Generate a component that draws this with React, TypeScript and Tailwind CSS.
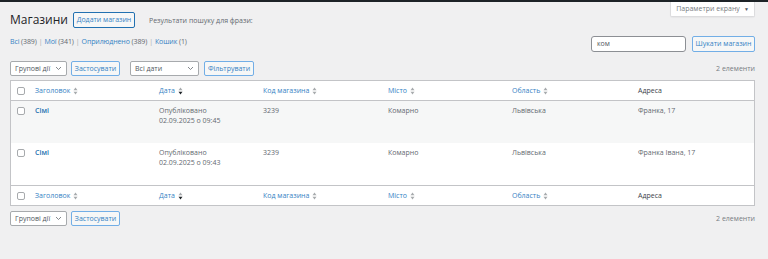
import React from "react";

const Sort = ({ active }: { active?: boolean }) => (
    <svg width="5" height="8" viewBox="0 0 10 16" className="ml-[3px] shrink-0">
        <path d="M5 1 L9 6.5 H1 Z" fill="#a7aaad" />
        <path d="M5 15 L9 9.5 H1 Z" fill={active ? "#1d2327" : "#a7aaad"} />
    </svg>
);

const Check = () => (
    <span className="block w-[8px] h-[8px] rounded-[2px] border border-[#a7aaad] bg-white" />
);

const Chevron = () => (
    <svg width="7" height="5" viewBox="0 0 14 10" className="shrink-0">
        <polyline points="2,2 7,7 12,2" fill="none" stroke="#646970" strokeWidth="1.6" />
    </svg>
);

const Select = ({ label, w }: { label: string; w: string }) => (
    <div className={`${w} h-[15px] flex items-center justify-between px-[4px] bg-white border border-[#a7aaad] rounded-[2px] text-[#50575e]`}>
        <span>{label}</span>
        <Chevron />
    </div>
);

const Button = ({ label, w }: { label: string; w: string }) => (
    <button className={`${w} h-[15px] flex items-center justify-center bg-[#f6f7f7] border border-[#72aee6] rounded-[2px] text-[#3582c4]`}>
        {label}
    </button>
);

const cols = "grid grid-cols-[19px_124px_104px_125px_124px_126px_1fr]";

const HeadRow = ({ top }: { top?: boolean }) => (
    <div className={`${cols} h-[20px] items-center ${top ? "border-b" : "border-t"} border-[#c3c4c7]`}>
        <div className="pl-[6px]"><Check /></div>
        <div className="pl-[5px] flex items-center text-[#3582c4]">Заголовок<Sort /></div>
        <div className="pl-[5px] flex items-center text-[#3582c4]">Дата<Sort active /></div>
        <div className="pl-[5px] flex items-center text-[#3582c4]">Код магазина<Sort /></div>
        <div className="pl-[5px] flex items-center text-[#3582c4]">Місто<Sort /></div>
        <div className="pl-[5px] flex items-center text-[#3582c4]">Область<Sort /></div>
        <div className="pl-[5px] text-[#3c434a]">Адреса</div>
    </div>
);

const rows = [
    { time: "02.09.2025 о 09:45", addr: "Франка, 17", bg: "bg-[#f6f7f7]" },
    { time: "02.09.2025 о 09:43", addr: "Франка Івана, 17", bg: "bg-white" },
];

export default function App() {
    return (
        <div className="w-[768px] h-[259px] bg-[#f0f0f1] overflow-hidden text-[7px] leading-[10px] text-[#646970] font-['Open_Sans',sans-serif]">
            <div className="h-[2px] bg-[#1d2327]" />
            <div className="pl-[10px] pr-[13px]">
                <div className="flex justify-between items-start h-[26px]">
                    <div className="flex items-center mt-[10px] h-[16px]">
                        <h1 className="text-[12px] leading-[16px] text-[#1d2327]">Магазини</h1>
                        <button className="ml-[5px] w-[62px] h-[16px] border border-[#2271b1] rounded-[2px] bg-[#f6f7f7] text-[#3582c4]">
                            Додати магазин
                        </button>
                        <span className="ml-[14px] mt-[2px]">Результати пошуку для фрази:</span>
                    </div>
                    <div className="w-[85px] h-[15px] flex items-center justify-center gap-[4px] bg-white border border-t-0 border-[#dcdcde] rounded-b-[2px] shadow-[0_1px_1px_rgba(0,0,0,0.04)] text-[#787c82]">
                        Параметри екрану
                        <span className="text-[5px] text-[#50575e]">▼</span>
                    </div>
                </div>

                <div className="flex justify-between items-start mt-[8px] h-[16px]">
                    <div className="pt-[1px] flex gap-[2px] tracking-[-0.1px]">
                        <span><a className="text-[#3582c4]">Всі</a> (389)</span>
                        <span className="text-[#a7aaad]">|</span>
                        <span><a className="text-[#3582c4]">Мої</a> (341)</span>
                        <span className="text-[#a7aaad]">|</span>
                        <span><a className="text-[#3582c4]">Оприлюднено</a> (389)</span>
                        <span className="text-[#a7aaad]">|</span>
                        <span><a className="text-[#3582c4]">Кошик</a> (1)</span>
                    </div>
                    <div className="flex items-center">
                        <div className="w-[95px] h-[16px] flex items-center px-[5px] bg-white border border-[#8c8f94] rounded-[3px] text-[#50575e]">ком</div>
                        <button className="ml-[6px] w-[63px] h-[16px] bg-[#f6f7f7] border border-[#72aee6] rounded-[2px] text-[#3582c4]">
                            Шукати магазин
                        </button>
                    </div>
                </div>

                <div className="flex items-center justify-between mt-[9px] h-[15px]">
                    <div className="flex items-center">
                        <Select label="Групові дії" w="w-[57px]" />
                        <div className="ml-[4px]"><Button label="Застосувати" w="w-[49px]" /></div>
                        <div className="ml-[10px]"><Select label="Всі дати" w="w-[69px]" /></div>
                        <div className="ml-[5px]"><Button label="Фільтрувати" w="w-[50px]" /></div>
                    </div>
                    <span className="text-[#787c82]">2 елементи</span>
                </div>

                <div className="mt-[4px] bg-white border border-[#c3c4c7]">
                    <HeadRow top />
                    {rows.map((r, i) => (
                        <div key={i} className={`${cols} h-[42px] pt-[5px] ${r.bg}`}>
                            <div className="pl-[6px] pt-[1px]"><Check /></div>
                            <div className="pl-[5px] font-semibold text-[#2271b1]">Сімі</div>
                            <div className="pl-[5px]">
                                <div>Опубліковано</div>
                                <div>{r.time}</div>
                            </div>
                            <div className="pl-[5px]">3239</div>
                            <div className="pl-[5px]">Комарно</div>
                            <div className="pl-[5px]">Львівська</div>
                            <div className="pl-[5px]">{r.addr}</div>
                        </div>
                    ))}
                    <HeadRow />
                </div>

                <div className="flex items-center justify-between mt-[5px] h-[15px]">
                    <div className="flex items-center">
                        <Select label="Групові дії" w="w-[57px]" />
                        <div className="ml-[4px]"><Button label="Застосувати" w="w-[49px]" /></div>
                    </div>
                    <span className="text-[#787c82]">2 елементи</span>
                </div>
            </div>
        </div>
    );
}
